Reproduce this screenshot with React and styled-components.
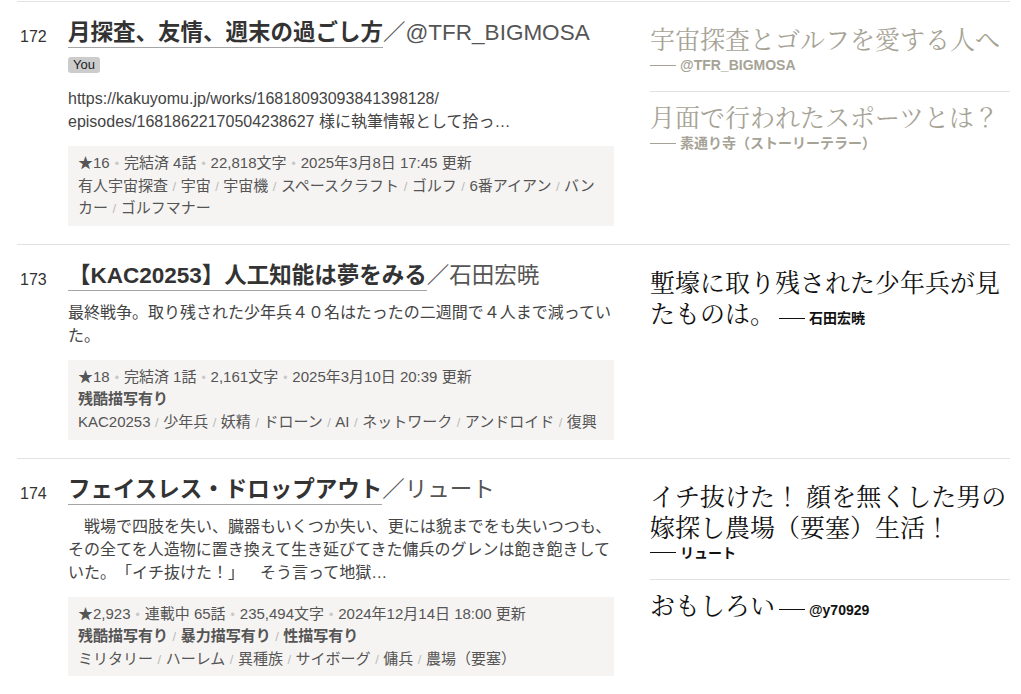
import React from "react";
import styled, { createGlobalStyle } from "styled-components";

const GlobalStyle = createGlobalStyle`
  body {
    margin: 0;
    background: #fff;
    font-family: "Liberation Sans", "Noto Sans CJK JP", sans-serif;
    color: #333;
    text-spacing-trim: space-all;
  }
`;

const List = styled.div`
  margin: 1px 0 0 17px;
  width: 993px;
`;

const Row = styled.div`
  display: grid;
  grid-template-columns: 51px 546px 396px;
  align-items: start;
  border-top: 1px solid #e2e2e2;
  padding: 17px 0 18px;
`;

const Rank = styled.div`
  padding: 4px 0 0 3px;
  font-size: 16px;
  line-height: 28px;
  color: #333;
`;

const Main = styled.div`
  display: flex;
  flex-direction: column;
  align-items: flex-start;
`;

const Heading = styled.div`
  font-size: 22.5px;
  line-height: 28px;
  white-space: nowrap;
  margin-bottom: 10px;
`;

const TitleText = styled.span`
  display: inline-block;
  font-weight: bold;
  color: #333;
  border-bottom: 1px solid #a5a5a5;
`;

const Author = styled.span`
  color: #555;
`;

const Badge = styled.span`
  display: inline-block;
  margin: -1px 0 14px;
  padding: 0 5px;
  font-size: 13px;
  line-height: 16px;
  color: #222;
  background: #ccc;
  border-radius: 3px;
`;

const Intro = styled.p`
  margin: 0;
  width: 100%;
  font-size: 16px;
  line-height: 23px;
  color: #444;
`;

const InfoBox = styled.div`
  box-sizing: border-box;
  width: 100%;
  margin-top: 13px;
  padding: 6px 10px;
  background: #f5f4f2;
  font-size: 15px;
  line-height: 22.6px;
  color: #555;
`;

const Line = styled.div`
  font-weight: ${(p) => (p.bold ? "bold" : "normal")};
`;

const Dot = styled.span`
  margin: 0 5px;
  color: #c8c8c8;
  font-size: 12px;
  line-height: 1;
`;

const Slash = styled.span`
  margin: 0 4.5px;
  color: #bbb;
  font-size: 13px;
  font-weight: normal;
  line-height: 1;
`;

const Reviews = styled.div`
  display: flex;
  flex-direction: column;
  padding-left: 36px;
`;

const Review = styled.div`
  padding: 11px 0 17px;
  font-size: 14px;
  line-height: 18px;
  color: ${(p) => (p.faded ? "#a6a396" : "#111")};
  &:first-child {
    padding-top: 6px;
  }
  & + & {
    border-top: 1px solid #e2e2e2;
  }
`;

const Catch = styled.span`
  font-family: "Liberation Serif", "Noto Serif CJK JP", "Noto Sans CJK JP", serif;
  font-size: 25px;
  line-height: 31px;
`;

const Reviewer = styled.span`
  white-space: nowrap;
  font-weight: bold;
`;

const Dash = styled.span`
  display: inline-block;
  width: 26px;
  margin-right: 4px;
  vertical-align: middle;
  border-top: 1px solid currentColor;
  position: relative;
  top: -1px;
`;

const works = [
  {
    rank: 172,
    title: "月探査、友情、週末の過ごし方",
    author: "@TFR_BIGMOSA",
    mine: true,
    intro: (
      <>
        https://kakuyomu.jp/works/16818093093841398128/
        <wbr />
        episodes/16818622170504238627 様に執筆情報として拾っ…
      </>
    ),
    meta: ["★16", "完結済 4話", "22,818文字", "2025年3月8日 17:45 更新"],
    warnings: [],
    tags: ["有人宇宙探査", "宇宙", "宇宙機", "スペースクラフト", "ゴルフ", "6番アイアン", "バンカー", "ゴルフマナー"],
    reviews: [
      { text: "宇宙探査とゴルフを愛する人へ", by: "@TFR_BIGMOSA" },
      { text: "月面で行われたスポーツとは？", by: "素通り寺（ストーリーテラー）" },
    ],
  },
  {
    rank: 173,
    title: "【KAC20253】人工知能は夢をみる",
    author: "石田宏暁",
    intro: "最終戦争。取り残された少年兵４０名はたったの二週間で４人まで減っていた。",
    meta: ["★18", "完結済 1話", "2,161文字", "2025年3月10日 20:39 更新"],
    warnings: ["残酷描写有り"],
    tags: ["KAC20253", "少年兵", "妖精", "ドローン", "AI", "ネットワーク", "アンドロイド", "復興"],
    reviews: [{ text: "塹壕に取り残された少年兵が見たものは。", by: "石田宏暁" }],
  },
  {
    rank: 174,
    title: "フェイスレス・ドロップアウト",
    author: "リュート",
    intro:
      "　戦場で四肢を失い、臓器もいくつか失い、更には貌までをも失いつつも、その全てを人造物に置き換えて生き延びてきた傭兵のグレンは飽き飽きしていた。「イチ抜けた！」　そう言って地獄…",
    meta: ["★2,923", "連載中 65話", "235,494文字", "2024年12月14日 18:00 更新"],
    warnings: ["残酷描写有り", "暴力描写有り", "性描写有り"],
    tags: ["ミリタリー", "ハーレム", "異種族", "サイボーグ", "傭兵", "農場（要塞）"],
    reviews: [
      { text: "イチ抜けた！ 顔を無くした男の嫁探し農場（要塞）生活！", by: "リュート" },
      { text: "おもしろい", by: "@y70929" },
    ],
  },
];

const joined = (items, sep) =>
  items.map((item, i) => (
    <React.Fragment key={i}>
      {i > 0 && sep}
      {item}
    </React.Fragment>
  ));

const App = () => {
  return (
    <>
      <GlobalStyle />
      <List>
        {works.map((w) => (
          <Row key={w.rank}>
            <Rank>{w.rank}</Rank>
            <Main>
              <Heading>
                <TitleText>{w.title}</TitleText>
                <Author>／{w.author}</Author>
              </Heading>
              {w.mine && <Badge>You</Badge>}
              <Intro>{w.intro}</Intro>
              <InfoBox>
                <Line>{joined(w.meta, <Dot>•</Dot>)}</Line>
                {w.warnings.length > 0 && (
                  <Line bold>{joined(w.warnings, <Slash>/</Slash>)}</Line>
                )}
                <Line>{joined(w.tags, <Slash>/</Slash>)}</Line>
              </InfoBox>
            </Main>
            <Reviews>
              {w.reviews.map((r, i) => (
                <Review key={i} faded={w.mine}>
                  <Catch>{r.text}</Catch>{" "}
                  <Reviewer>
                    <Dash />
                    {r.by}
                  </Reviewer>
                </Review>
              ))}
            </Reviews>
          </Row>
        ))}
      </List>
    </>
  );
};

export default App;
